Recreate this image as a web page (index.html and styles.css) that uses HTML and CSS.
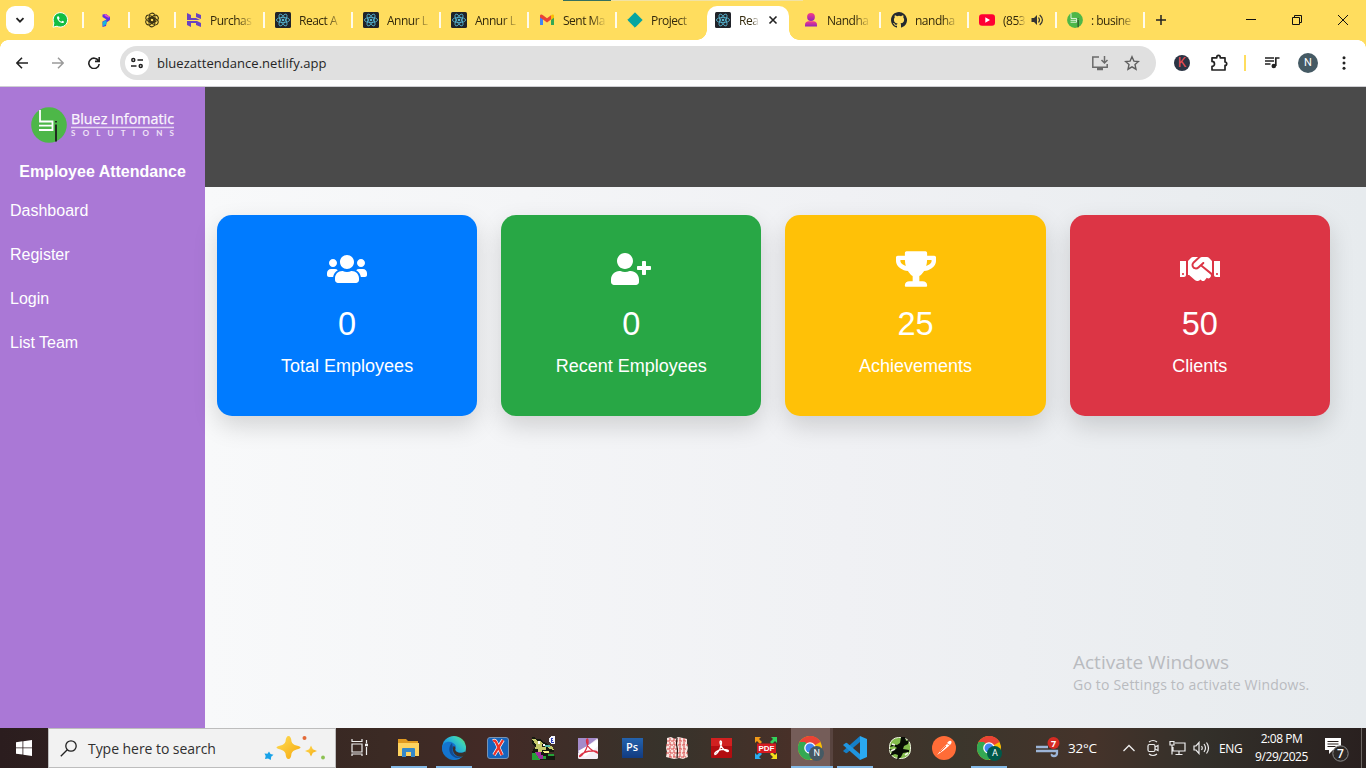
FILE: index.html
```html
<!DOCTYPE html>
<html lang="en">
<head>
<meta charset="utf-8">
<title>Employee Attendance</title>
<link rel="stylesheet" href="styles.css">
</head>
<body>
<svg class="defs" width="0" height="0">
  <defs>
    <symbol id="react" viewBox="0 0 16 16"><rect width="16" height="16" rx="1.5" fill="#20232a"/><g fill="none" stroke="#56b4d0" stroke-width=".85"><ellipse cx="8" cy="8" rx="6.6" ry="2.6"/><ellipse cx="8" cy="8" rx="6.6" ry="2.6" transform="rotate(60 8 8)"/><ellipse cx="8" cy="8" rx="6.6" ry="2.6" transform="rotate(120 8 8)"/></g><circle cx="8" cy="8" r="1.3" fill="#56b4d0"/></symbol>
    <symbol id="bluez" viewBox="0 0 36 36"><circle cx="18" cy="18" r="17.8" fill="#4db748"/><path d="M9 3v11.500h12.500v8.500H8M8 18.700h13" fill="none" stroke="#fff" stroke-width="1.800"/><path d="M25 14v1.500M25 17.500v17" stroke="#202b20" stroke-width="2"/></symbol>
    <symbol id="chrome" viewBox="0 0 24 24"><circle cx="12" cy="12" r="12" fill="#fbbc04"/><path d="M12 12L1.600 6A12 12 0 0 1 22.400 6z" fill="#ea4335"/><path d="M12 0a12 12 0 0 1 10.400 6H12z" fill="#ea4335"/><path d="M1.600 6A12 12 0 0 0 12 24l5.200-9L12 12z" fill="#34a853"/><path d="M1.600 6l5.200 9L12 12 7 6z" fill="#34a853"/><circle cx="12" cy="12" r="5.800" fill="#fff"/><circle cx="12" cy="12" r="4.500" fill="#4285f4"/></symbol>
    <linearGradient id="person" x1="0" y1="0" x2="0" y2="1"><stop offset="0" stop-color="#f73b88"/><stop offset="1" stop-color="#9423b8"/></linearGradient>
    <linearGradient id="edge" x1="0" y1="1" x2="1" y2="0"><stop offset="0" stop-color="#0c59a4"/><stop offset=".45" stop-color="#1b9de2"/><stop offset=".75" stop-color="#39cfc0"/><stop offset="1" stop-color="#6de04d"/></linearGradient>
    <linearGradient id="gold" x1="0" y1="0" x2="1" y2="1"><stop offset="0" stop-color="#ffdf5a"/><stop offset="1" stop-color="#f5a70b"/></linearGradient>
    <linearGradient id="pr" x1="0" y1="0" x2="1" y2="1"><stop offset="0" stop-color="#22c1ef"/><stop offset=".4" stop-color="#5b2be0"/><stop offset="1" stop-color="#7a32ee"/></linearGradient>
  </defs>
</svg>

<header class="tabstrip">
  <button class="tab-search"><svg width="10" height="10" viewBox="0 0 10 10"><path d="M1.500 3.200L5 6.700l3.500-3.500" fill="none" stroke="#222" stroke-width="1.800"/></svg></button>
  <div class="tab pinned"><svg width="16" height="16" viewBox="0 0 16 16"><path d="M1 15.200L1.900 11A7.200 7.200 0 1 1 5 14.200z" fill="#12bd43" stroke="#fff" stroke-width="1"/><path d="M5.500 4.500c-2 1.600 2.700 7.300 5.500 6.500 2-.8 1-1.600-.7-2.300l-1 1c-1.200-.4-2-1.300-2.500-2.400l.8-.9c-.6-1.800-1.200-2.300-2.100-1.900z" fill="#fff"/></svg></div>
  <div class="tab pinned"><svg width="16" height="16" viewBox="0 0 16 16"><path d="M4.500 2.500L8 2l4 3v3l-3.500 2.500L8 14l-3.500 1V9.500L8.500 7.500 4.500 5z" fill="#5d2de2"/><path d="M7 1.800l5 3.200-1.500.8-4-2z" fill="#e84bcb"/><path d="M4.500 10L8.500 8v4L5 14.500z" fill="#15b7dc"/></svg></div>
  <div class="tab pinned"><svg width="16" height="16" viewBox="0 0 16 16" fill="none" stroke="#3a3212" stroke-width="1.100"><path id="lobe" d="M5.200 4.800V4a2.900 2.900 0 0 1 5.500-1.200M5.200 4.500v4L8 10.100M6.300 3.600L10 5.700v2.500"/><use href="#lobe" transform="rotate(60 8 8)"/><use href="#lobe" transform="rotate(120 8 8)"/><use href="#lobe" transform="rotate(180 8 8)"/><use href="#lobe" transform="rotate(240 8 8)"/><use href="#lobe" transform="rotate(300 8 8)"/></svg></div>
  <div class="tab first"><svg width="16" height="16" viewBox="0 0 16 16" fill="#6b43c0"><path d="M1 1l4 2v3h5l4 2H1zM10 1l5 2v4l-5-2zM1 9h10l4 2v4l-5-2v-2H5v4l-4-2z"/></svg><span>Purchas</span></div>
  <div class="tab"><svg width="16" height="16"><use href="#react"/></svg><span>React A</span></div>
  <div class="tab"><svg width="16" height="16"><use href="#react"/></svg><span>Annur L</span></div>
  <div class="tab"><svg width="16" height="16"><use href="#react"/></svg><span>Annur L</span></div>
  <div class="tab"><svg width="16" height="16" viewBox="0 0 16 16"><path d="M1 4v9h3V6z" fill="#4285f4"/><path d="M15 4v9h-3V6z" fill="#34a853"/><path d="M12 3.500V8l3-2.200V4c0-1.500-1.600-2-3-.5z" fill="#fbbc04"/><path d="M1 4c0-1.500 1.600-2 3-.7l4 3 4-3V7.500l-4 3-4-3L1 5.500z" fill="#ea4335"/></svg><span>Sent Ma</span></div>
  <div class="tab no-line"><svg width="16" height="16" viewBox="0 0 16 16"><path d="M8 .8L15.200 8 8 15.200.8 8z" fill="#06a5a0" stroke="#06a5a0" stroke-linejoin="round"/></svg><span>Project</span></div>
  <div class="tab active"><svg width="16" height="16"><use href="#react"/></svg><span>Rea</span><svg width="10" height="10" viewBox="0 0 10 10"><path d="M1.500 1.500l7 7M8.500 1.500l-7 7" stroke="#222" stroke-width="1.600"/></svg></div>
  <div class="tab after"><svg width="16" height="16" viewBox="0 0 16 16" fill="url(#person)"><circle cx="8" cy="5" r="3.900"/><path d="M2 14.500v-2c0-2 1.500-3 3.500-3.200h5c2 .2 3.500 1.200 3.500 3.200v2z"/></svg><span>Nandha</span></div>
  <div class="tab"><svg width="16" height="16" viewBox="0 0 16 16"><path fill="#24292f" d="M8 0C3.580 0 0 3.580 0 8c0 3.540 2.290 6.530 5.470 7.590.4.070.55-.17.55-.38 0-.19-.01-.82-.01-1.490-2.010.37-2.530-.49-2.690-.94-.09-.23-.48-.94-.82-1.130-.28-.15-.68-.52-.01-.53.63-.01 1.080.58 1.230.82.72 1.210 1.870.87 2.330.66.07-.52.28-.87.51-1.070-1.780-.2-3.640-.89-3.640-3.950 0-.87.31-1.590.82-2.150-.08-.2-.36-1.020.08-2.120 0 0 .67-.21 2.200.82a7.600 7.600 0 0 1 4 0c1.530-1.040 2.200-.82 2.200-.82.44 1.100.16 1.920.08 2.120.51.56.82 1.270.82 2.150 0 3.070-1.870 3.750-3.650 3.950.29.25.54.73.54 1.480 0 1.070-.01 1.930-.01 2.200 0 .21.15.46.55.38A8 8 0 0 0 8 0z"/></svg><span>nandha</span></div>
  <div class="tab audio"><svg width="16" height="16" viewBox="0 0 16 16"><rect y="2.200" width="16" height="11.600" rx="3" fill="#ff0033"/><path d="M6.300 5.300v5.400L11 8z" fill="#fff"/></svg><span>(853</span><svg class="sound" width="13" height="12" viewBox="0 0 13 12"><path d="M.5 4h2.500l3-3v10L3 8H.5z" fill="#333"/><path d="M7.500 3.500q2 2.500 0 5M8.700 1q5.500 5 0 10" fill="none" stroke="#333" stroke-width="1.200"/></svg></div>
  <div class="tab"><svg width="16" height="16"><use href="#bluez"/></svg><span>: busine</span></div>
  <button class="new-tab"><svg width="10" height="10" viewBox="0 0 10 10"><path d="M5 0v10M0 5h10" stroke="#222" stroke-width="1.500"/></svg></button>
  <div class="window-buttons">
    <svg width="10" height="10" viewBox="0 0 10 10"><path d="M0 4.500h10" stroke="#111"/></svg>
    <svg width="10" height="10" viewBox="0 0 10 10" fill="none" stroke="#111"><path d="M.5 2.500h7v7h-7zM2.500 2.500v-2h7v7h-2"/></svg>
    <svg width="10" height="10" viewBox="0 0 10 10"><path d="M0 0l10 10M10 0L0 10" stroke="#111"/></svg>
  </div>
  <div class="edge-line"></div>
</header>

<div class="toolbar">
  <nav class="history">
    <svg width="12" height="12" viewBox="0 0 12 12"><path d="M12 6H1M6 .8L.8 6 6 11.200" fill="none" stroke="#222" stroke-width="1.600"/></svg>
    <svg width="12" height="12" viewBox="0 0 12 12"><path d="M0 6h11M6 .8L11.200 6 6 11.200" fill="none" stroke="#9a9a9a" stroke-width="1.500"/></svg>
    <svg width="12" height="12" viewBox="0 0 12 12"><path d="M10.500 3.700A5.200 5.200 0 1 0 11.200 7M11.200 0v4.400H7" fill="none" stroke="#222" stroke-width="1.600"/></svg>
  </nav>
  <div class="omnibox">
    <span class="site-info"><svg width="12" height="12" viewBox="0 0 12 12" fill="none" stroke="#222" stroke-width="1.500"><circle cx="2.300" cy="3" r="1.500"/><path d="M6.500 3H12M0 9h5.500"/><circle cx="9.700" cy="9" r="1.500"/></svg></span>
    <span class="url">bluezattendance.netlify.app</span>
    <svg width="16" height="16" viewBox="0 0 16 16" fill="none" stroke="#6b6b6b" stroke-width="1.500"><path d="M7 2H.8v10.200h14.400V9"/><path d="M5 14h6" stroke-width="2.500"/><path d="M12.500 1v6.500M9.500 5l3 3 3-3"/></svg>
    <svg width="16" height="16" viewBox="0 0 16 16" fill="none" stroke="#5e5e5e" stroke-width="1.400"><path d="M8 1.800l1.900 4.300 4.600.4-3.500 3.100 1 4.600L8 11.800l-4 2.400 1-4.600-3.500-3.100 4.600-.4z"/></svg>
  </div>
  <div class="extensions">
    <span class="k-badge">K</span>
    <svg width="18" height="18" viewBox="0 0 18 18"><path d="M2 3.800h4.800V3a1.700 1.700 0 0 1 3.400 0v.8H15V8a1.700 1.700 0 0 1 0 3.400V16H2v-3.600a2.500 2.500 0 0 0 0-5z" fill="none" stroke="#222" stroke-width="1.700" stroke-linejoin="round"/></svg>
    <i class="divider"></i>
    <svg width="16" height="14" viewBox="0 0 16 14"><path d="M1 2h9M1 5h9M1 8h5.500" stroke="#222" stroke-width="1.500"/><circle cx="9.800" cy="10" r="2.300" fill="#222"/><path d="M11.800 10V2h3.700" fill="none" stroke="#222" stroke-width="1.700"/></svg>
    <span class="avatar">N</span>
    <svg width="4" height="14" viewBox="0 0 4 14" fill="#222"><circle cx="2" cy="1.700" r="1.500"/><circle cx="2" cy="7" r="1.500"/><circle cx="2" cy="12.300" r="1.500"/></svg>
  </div>
</div>

<div class="page">
  <aside class="sidebar">
    <svg class="logo" width="146" height="38" viewBox="0 0 146 38"><use href="#bluez" x="1" y="1" width="36" height="36"/><text x="41" y="17.500" class="logo-name" textLength="103" lengthAdjust="spacingAndGlyphs">Bluez Infomatic</text><path d="M41 21.500h103" stroke="#e6d3f3" stroke-width="1.300"/><text x="41" y="30.200" class="logo-sub" textLength="103">SOLUTIONS</text></svg>
    <h1 class="title">Employee Attendance</h1>
    <nav class="menu"><a>Dashboard</a><a>Register</a><a>Login</a><a>List Team</a></nav>
  </aside>
  <main class="content">
    <div class="banner"></div>
    <section class="cards">
      <article class="card blue"><svg width="40" height="40" viewBox="0 0 640 512"><path d="M96 224c35.300 0 64-28.700 64-64s-28.700-64-64-64-64 28.700-64 64 28.700 64 64 64zm448 0c35.300 0 64-28.700 64-64s-28.700-64-64-64-64 28.700-64 64 28.700 64 64 64zm32 32h-64c-17.600 0-33.500 7.100-45.100 18.600 40.300 22.100 68.900 62 75.100 109.400h66c17.700 0 32-14.300 32-32v-32c0-35.300-28.700-64-64-64zm-256 0c61.900 0 112-50.100 112-112S381.900 32 320 32 208 82.100 208 144s50.100 112 112 112zm76.800 32h-8.300c-20.800 10-43.900 16-68.500 16s-47.600-6-68.500-16h-8.300C179.600 288 128 339.600 128 403.200V432c0 26.500 21.500 48 48 48h288c26.500 0 48-21.500 48-48v-28.800c0-63.600-51.600-115.200-115.200-115.200zm-223.700-13.400C161.500 263.100 145.600 256 128 256H64c-35.300 0-64 28.700-64 64v32c0 17.700 14.300 32 32 32h65.900c6.300-47.400 34.900-87.300 75.200-109.400z"/></svg><strong>0</strong><span>Total Employees</span></article>
      <article class="card green"><svg width="40" height="40" viewBox="0 0 640 512"><path d="M624 208h-64v-64c0-8.800-7.200-16-16-16h-32c-8.800 0-16 7.200-16 16v64h-64c-8.800 0-16 7.200-16 16v32c0 8.800 7.200 16 16 16h64v64c0 8.800 7.200 16 16 16h32c8.800 0 16-7.200 16-16v-64h64c8.800 0 16-7.200 16-16v-32c0-8.800-7.200-16-16-16zm-400 48c70.700 0 128-57.300 128-128S294.700 0 224 0 96 57.300 96 128s57.300 128 128 128zm89.600 32h-16.700c-22.200 10.200-46.900 16-72.900 16s-50.600-5.800-72.900-16h-16.700C60.200 288 0 348.200 0 422.400V464c0 26.500 21.500 48 48 48h352c26.500 0 48-21.500 48-48v-41.600c0-74.200-60.200-134.400-134.400-134.400z"/></svg><strong>0</strong><span>Recent Employees</span></article>
      <article class="card amber"><svg width="40" height="40" viewBox="0 0 576 512"><path d="M552 64H448V24c0-13.300-10.700-24-24-24H152c-13.300 0-24 10.700-24 24v40H24C10.700 64 0 74.700 0 88v56c0 35.700 22.500 72.400 61.900 100.700 31.500 22.700 69.800 37.100 110 41.700C203.300 338.500 240 360 240 360v72h-48c-35.300 0-64 20.700-64 56v12c0 6.600 5.400 12 12 12h296c6.600 0 12-5.400 12-12v-12c0-35.300-28.700-56-64-56h-48v-72s36.700-21.500 68.100-73.600c40.300-4.600 78.600-19 110-41.700 39.300-28.300 61.900-65 61.900-100.700V88c0-13.300-10.700-24-24-24zM99.300 192.800C74.900 175.200 64 155.600 64 144v-16h64.200c1 32.600 5.800 61.200 12.800 86.200-15.100-5.200-29.200-12.400-41.700-21.400zM512 144c0 16.100-17.700 36.100-35.300 48.800-12.500 9-26.700 16.200-41.800 21.400 7-25 11.800-53.600 12.800-86.200H512v16z"/></svg><strong>25</strong><span>Achievements</span></article>
      <article class="card red"><svg width="40" height="40" viewBox="0 0 640 512"><path d="M434.700 64h-85.900c-8 0-15.700 3-21.600 8.400l-98.300 90c-.1.100-.2.300-.3.400-16.600 15.600-16.300 40.500-2.100 56 12.700 13.900 39.400 17.600 56.100 2.700.1-.1.300-.1.400-.2l79.900-73.200c6.500-5.900 16.700-5.500 22.600 1 6 6.500 5.500 16.600-1 22.600l-26.100 23.900L504 313.800c2.900 2.400 5.500 5 7.900 7.700V128l-54.600-54.600c-5.900-6-14.100-9.400-22.600-9.400zM544 128.200v223.900c0 17.700 14.300 32 32 32h64V128.200h-96zm48 223.900c-8.800 0-16-7.200-16-16s7.200-16 16-16 16 7.200 16 16-7.200 16-16 16zM0 384h64c17.700 0 32-14.300 32-32V128.200H0V384zm48-63.900c8.800 0 16 7.200 16 16s-7.200 16-16 16-16-7.200-16-16c0-8.900 7.200-16 16-16zm435.900 18.600L334.600 217.500l-30 27.500c-29.700 27.100-75.200 24.500-101.700-4.400-26.900-29.400-24.800-74.900 4.400-101.700L289.100 64h-83.800c-8.500 0-16.600 3.400-22.600 9.400L128 128v223.900h18.300l90.500 81.900c27.400 22.300 67.700 18.100 90-9.300l.2-.2 17.900 15.500c15.900 13 39.400 10.500 52.300-5.400l31.400-38.600 5.400 4.400c13.700 11.100 33.900 9.100 45-4.700l9.500-11.700c11.200-13.800 9.100-33.900-4.600-45.100z"/></svg><strong>50</strong><span>Clients</span></article>
    </section>
  </main>
  <div class="watermark"><b>Activate Windows</b><span>Go to Settings to activate Windows.</span></div>
</div>

<footer class="taskbar">
  <div class="start"><svg width="16" height="16" viewBox="0 0 16 16" fill="#fff"><path d="M0 2.200l6.500-.9v6.200H0zM7.300 1.200L16 0v7.500H7.300zM0 8.300h6.500v6.300L0 13.800zM7.300 8.300H16V16l-8.700-1.200z"/></svg></div>
  <div class="search">
    <svg width="17" height="17" viewBox="0 0 17 17" fill="none" stroke="#222" stroke-width="1.300"><circle cx="11" cy="6" r="5.200"/><path d="M7.300 9.700L.8 16.200"/></svg>
    <span>Type here to search</span>
    <svg width="62" height="26" viewBox="0 0 62 26"><path d="M24.500 1q2.500 0 3 5.500 1 3 5 4 4 1 4 2t-4 2q-4 1-5 4-.5 5.500-3 5.500t-3-5.500q-1-3-5-4-4-1-4-2t4-2q4-1 5-4 .5-5.500 3-5.500z" fill="url(#gold)"/><path d="M47 10.500l1.800 3.700 4.200 1.800-4.200 1.800L47 21.500l-1.800-3.700L41 16l4.200-1.800z" fill="url(#gold)"/><path d="M5 16.500l1.500 2.500 3 .8-2.300 2-.4 3.200-2.800-1.500-3 .5.700-3-1.200-2.500 3 .3z" fill="#18a2e8"/><circle cx="40.500" cy="3" r="2" fill="#e36a37"/><circle cx="59" cy="22.500" r="1.900" fill="#8cc152"/></svg>
  </div>
  <div class="apps">
    <div class="app task-view"><svg width="18" height="18" viewBox="0 0 18 18" fill="none" stroke="#eee" stroke-width="1.200"><path d="M1 5h10v8H1zM1 0v2.500h10V0M1 17v-2h10v2M15.500 1v3.500M15.500 8v8"/><path d="M14 6h3" stroke-width="2.500"/></svg></div>
    <div class="app open"><svg width="24" height="24" viewBox="0 0 24 24"><path d="M1 3h8l2 2h10v5H1z" fill="#e19a20"/><path d="M1 7h21v13H1z" fill="#ffd35f"/><path d="M5 21v-8q0-1 1-1h11q1 0 1 1v8h-4v-5H9v5z" fill="#3688c8"/></svg></div>
    <div class="app open"><svg width="24" height="24" viewBox="0 0 24 24"><circle cx="12" cy="12" r="12" fill="url(#edge)"/><path d="M0 12C1 6 7 4.500 11 7c3 2 3.500 4 2.500 5.500-1 2 1 4.500 5 4.300 2 0 3.200-.6 4.200-1.300C20 22 14 25 9 23 4 21 0 17 0 12z" fill="#1474cf"/><path d="M10 7C7 10 6 15 9.500 19c3 3.500 7.500 4 10.500 1.800-7 1.200-11-4-9-8.800z" fill="#124b90"/><path d="M11.500 10q2 0 2 2.500c-1 1.500.8 4.300 5 4.300 2 0 3.500-.6 4.500-1.300l1 3-3 2c-6 1.500-12-3-9.500-10.500z" fill="#3a302a"/></svg></div>
    <div class="app"><svg width="22" height="22" viewBox="0 0 22 22"><rect x=".5" y=".5" width="21" height="21" rx="2.500" fill="#1564bd" stroke="#7892b2"/><path d="M6 4q2-1 3 1l6 13M16 3L7 18" stroke="#fff" stroke-width="3.600" fill="none"/><path d="M6 4q2-1 3 1l6 13M16 3L7 18" stroke="#ee3328" stroke-width="2.400" fill="none"/></svg></div>
    <div class="app"><svg width="24" height="24" viewBox="0 0 24 24" shape-rendering="crispEdges"><path d="M1 1h2l2 2h4l3 3 3 1 3 2 5 4v3h-4l-3 2h5l3 3v3H1v-8l3-5-3-4z" fill="#151910"/><path d="M1 3h3l3 2h3l2 3-3 1H5zM5 9h6v2h4v3h-4v2H7v-3H4zM17 10h4l2 4-5-1z" fill="#c6c96b"/><path d="M1 17h3l3 3 2 4H1zM17 18h6v2h-6zM11 20h4v3h-3z" fill="#24a137"/><path d="M4 16h6v3h2v4H8z" fill="#9c2d9c"/><path d="M12 15h6v2h-5z" fill="#f6ef87"/><path d="M7 5h2v3H7zM12 8h2v2h-2z" fill="#fff"/><path d="M14 9h5v2h-5z" fill="#50b6a6"/><path d="M20 0h4v8h-4l-2-2V2z" fill="#f4f6ff"/><path d="M22 2h-2v4h3M20 4h2" fill="none" stroke="#3040bd"/></svg></div>
    <div class="app"><svg width="20" height="21" viewBox="0 0 20 21"><rect width="20" height="21" rx="1.500" fill="#f5eff6"/><path d="M0 0h20L0 15z" fill="#a48bca"/><path d="M0 13L20 2v6L7 19z" fill="#fff"/><path d="M9.500 1q-1.500 0-.7 4 1 6 10.500 10 .5-2.500-5-2Q6 13 1.500 18q0 1.500 2.500-1 5-5 6-12 0-4-.5-4z" fill="none" stroke="#dc3044" stroke-width="1.300"/></svg></div>
    <div class="app"><span class="ps">Ps</span></div>
    <div class="app"><svg width="24" height="24" viewBox="0 0 24 24"><path d="M2 2l4-1 4 2 3-2 5 1 4 1v5l1 4-1 4 1 5-5 2-4-1-5 1-4-1-4-1 1-5-1-4 1-5z" fill="#f9e6e1"/><path d="M2 5h20M1 9h22M2 13h20M1 17h22M4 21h17M5 2v20M9 2v20M15 2v20M19 2v20" stroke="#d84848" stroke-width="1" stroke-dasharray="3 1"/><path d="M12 2l-.5 6 1 6-.5 8" fill="none" stroke="#281510" stroke-width="1.200"/></svg></div>
    <div class="app"><svg width="21" height="20" viewBox="0 0 21 20"><rect width="21" height="20" rx="1" fill="#b20d10"/><path d="M0 0h21v8H0z" fill="#d12020"/><path d="M10 3q-1.500 0-.7 3Q11 11 16 13.500q2.500 0 .7-1.400-4-1.600-9 .2Q2.500 15 4 16.500q2 0 5-6 2.500-7 1-7.500z" fill="none" stroke="#fff" stroke-width="1.300"/></svg></div>
    <div class="app"><svg width="24" height="24" viewBox="0 0 24 24"><path d="M1 1h6L5 3l3 3-2 2-3-3-2 2z" fill="#f29a18"/><path d="M23 1v6l-2-2-3 3-2-2 3-3-2-2z" fill="#32d45c"/><path d="M1 23v-6l2 2 3-3 2 2-3 3 2 2z" fill="#29aef0"/><path d="M23 23h-6l2-2-3-3 2-2 3 3 2-2z" fill="#f3df1c"/><rect x="3" y="7.500" width="19" height="9.500" fill="#d61b20"/><text x="12.500" y="15.200" text-anchor="middle" class="pdf">PDF</text></svg></div>
    <div class="app open current"><svg width="24" height="24"><use href="#chrome" width="24" height="24"/></svg><span class="profile slate">N</span></div>
    <div class="app open"><svg width="24" height="24" viewBox="0 0 24 24"><path d="M17 0l7 3v18l-7 3z" fill="#2aa9f2"/><path d="M17 0v6L4 17l-1 .3L0 15z" fill="#157fc7"/><path d="M17 24v-6L4 7l-1-.3L0 9z" fill="#1f95e0"/></svg></div>
    <div class="app"><svg width="24" height="24" viewBox="0 0 24 24"><rect x="1.500" y="1.500" width="21" height="21" rx="9" fill="#83bd4c" stroke="#eef5df"/><path d="M13 1h4l1 4 3-1-1 4-4 2-1 3 6 1v2l-6 1-2 4-4 3 1-5-3-1-5 2 2-4-3-3 5 1 3-2-3-2-4 1 2-3 5 1 3-2z" fill="#080d05"/><path d="M3 15l4-2M4 8l3 1M17 19l3-2" stroke="#f3f8e7" stroke-width="1.600"/></svg></div>
    <div class="app"><svg width="24" height="24" viewBox="0 0 24 24"><circle cx="12" cy="12" r="12" fill="#ff6c37"/><path d="M5 19l5-6 5-5 2.500 1.500-6 5zM15 7l2-2q3-1 2.500 2L18 9z" fill="#fff"/><path d="M8 16l6-6" stroke="#ff6c37"/></svg></div>
    <div class="app open"><svg width="24" height="24"><use href="#chrome" width="24" height="24"/></svg><span class="profile teal">A</span></div>
  </div>
  <div class="weather"><svg width="24" height="22" viewBox="0 0 24 22"><path d="M0 10h12M0 14h21v2q0 3-3 3-3 0-2-2" stroke="#9db5d7" stroke-width="2.300" fill="none"/><circle cx="17.500" cy="6" r="6" fill="#d52b22"/><text x="17.500" y="9.500" text-anchor="middle" class="badge-no">7</text></svg><span>32°C</span></div>
  <div class="tray">
    <svg width="12" height="8" viewBox="0 0 12 8"><path d="M.5 7L6 1.500 11.500 7" fill="none" stroke="#eee" stroke-width="1.300"/></svg>
    <svg width="12" height="18" viewBox="0 0 12 18" fill="none" stroke="#eee" stroke-width="1.200"><rect x="1" y="5.500" width="7" height="7" rx="1.500"/><path d="M8 8l3-1.500v5L8 10M2 3q4-3 8 0M2 15q4 3 8 0"/></svg>
    <svg width="17" height="16" viewBox="0 0 17 16" fill="none" stroke="#eee" stroke-width="1.200"><path d="M6 3h10v8H4V7M10 11v3.500M6.500 14.500h7M1 1.500h4v3.500H1zM3 5v9.500"/></svg>
    <svg width="17" height="14" viewBox="0 0 17 14" fill="none" stroke="#eee" stroke-width="1.200"><path d="M1 5h2l3-3.500v11L3 9H1zM8.500 5q1.500 2 0 4M11 3q3 4 0 8M13.500 1.500q4 5.500 0 11"/></svg>
  </div>
  <span class="lang">ENG</span>
  <div class="clock"><span>2:08 PM</span><span>9/29/2025</span></div>
  <div class="notify"><svg width="26" height="26" viewBox="0 0 26 26"><path d="M1 1h16v12H9l-4 4v-4H1z" fill="#fff"/><path d="M3.500 4.500h11M3.500 7h11M3.500 9.500h8" stroke="#29211e"/><circle cx="16.500" cy="16.500" r="7.700" fill="#2d2927" stroke="#8a8a8a"/><text x="16.500" y="21" text-anchor="middle" class="note-no">7</text></svg></div>
</footer>
</body>
</html>
```
FILE: styles.css
```css
* { box-sizing: border-box; }
body { margin: 0; width: 1366px; height: 768px; overflow: hidden; display: flex; flex-direction: column; font-family: "Liberation Sans", Arial, sans-serif; background: #fff; }
svg { display: block; flex: none; }
.defs { position: absolute; }
button { border: 0; padding: 0; background: none; display: flex; align-items: center; justify-content: center; }

.tabstrip { position: relative; height: 40px; flex: none; background: #ffdd5e; display: flex; align-items: center; padding-left: 6px; font: 12px "Open Sans", "Noto Sans", sans-serif; color: #33290c; }
.tab-search { width: 28px; height: 28px; border-radius: 9px; background: #fff; margin-right: 4px; }
.tab { width: 88px; height: 16px; flex: none; display: flex; align-items: center; gap: 8px; padding-left: 10px; border-right: 2px solid #fffbea; }
.tab span { width: 46px; white-space: nowrap; letter-spacing: -.5px; line-height: 18px; padding-top: 1px; -webkit-mask-image: linear-gradient(90deg, #000 60%, rgba(0, 0, 0, .15) 90%); mask-image: linear-gradient(90deg, #000 60%, rgba(0, 0, 0, .15) 90%); }
.tab.pinned { width: 46px; padding-left: 14px; }
.tab.first { width: 89px; }
.tab.no-line { border-color: transparent; }
.tab.active { position: relative; width: 82px; height: 34px; margin: 6px 4px 0 2px; padding: 0 0 6px 8px; border: 0; border-radius: 10px 10px 0 0; background: #fff; }
.tab.active span { width: 21px; }
.tab.active::before, .tab.active::after { content: ""; position: absolute; bottom: 0; width: 10px; height: 10px; }
.tab.active::before { left: -10px; background: radial-gradient(circle at 0 0, transparent 9.5px, #fff 10px); }
.tab.active::after { right: -10px; background: radial-gradient(circle at 100% 0, transparent 9.5px, #fff 10px); }
.tab.audio span { width: 24px; }
.sound { margin-left: -4px; }
.new-tab { width: 32px; height: 28px; }
.window-buttons { margin-left: auto; display: flex; gap: 36px; padding-right: 18px; }
.edge-line { position: absolute; top: 0; left: 563px; width: 240px; height: 1px; background: linear-gradient(90deg, #35705f 48px, #f1e2a4 48px); }

.toolbar { height: 47px; flex: none; display: flex; align-items: center; padding-bottom: 1px; border-bottom: 1px solid #cfcfd3; background: radial-gradient(circle at 8px 8px, #fff 7.5px, #ffdd5e 8px) 0 0 / 8px 8px no-repeat, radial-gradient(circle at 0 8px, #fff 7.5px, #ffdd5e 8px) 100% 0 / 8px 8px no-repeat, #fff; }
.history { width: 120px; display: flex; gap: 24px; padding-left: 16px; }
.omnibox { width: 1036px; height: 34px; border-radius: 17px; background: #e0e0e0; display: flex; align-items: center; gap: 16px; padding: 0 16px 0 5px; }
.site-info { width: 24px; height: 24px; border-radius: 50%; background: #fff; display: flex; align-items: center; justify-content: center; }
.url { flex: 1; margin-left: -8px; font: 13px "Open Sans", "Noto Sans", sans-serif; letter-spacing: .04px; color: #252525; }
.extensions { flex: 1; display: flex; align-items: center; padding-left: 18px; }
.k-badge { width: 16px; height: 16px; border-radius: 50%; background: #2b3444; color: #ea4c53; font: 14px/16px "Liberation Mono", monospace; text-align: center; margin-right: 20px; }
.divider { width: 2px; height: 16px; background: #ffdd5e; margin: 0 18px 0 16px; }
.avatar { width: 20px; height: 20px; border-radius: 50%; background: #455a64; color: #fff; font: 11px/20px Roboto, sans-serif; text-align: center; margin: 0 24px 0 18px; }

.page { position: relative; height: 641px; flex: none; display: flex; }
.sidebar { width: 205px; background: #aa78d6; color: #fff; display: flex; flex-direction: column; }
.logo { margin: 19px 0 0 30px; }
.logo-name { font: 400 15px "Open Sans", sans-serif; fill: #fbf6fd; stroke: #fbf6fd; stroke-width: .25px; }
.logo-sub { font: 700 8px Lato, sans-serif; fill: #f0e3f8; }
.title { margin: 19px 0 0; font-size: 16px; line-height: 18px; text-align: center; }
.menu { display: flex; flex-direction: column; gap: 26px; padding: 21px 10px; font-size: 16px; line-height: 18px; }
.content { flex: 1; background: linear-gradient(90deg, #f8f9fa, #f0f1f4 55%, #e7ebee); }
.banner { height: 100px; background: #4a4a4a; }
.cards { display: grid; grid-template-columns: repeat(4, 1fr); gap: 24px; padding: 28px 36.2px 0 12px; }
.card { height: 201px; border-radius: 15px; padding-top: 34px; display: flex; flex-direction: column; align-items: center; color: #fff; box-shadow: 0 10px 25px rgba(0, 0, 0, .15); }
.card svg { fill: #fff; }
.card strong { font-weight: 400; font-size: 32.5px; line-height: 37px; margin-top: 17px; }
.card span { font-size: 18px; line-height: 21px; margin-top: 13px; }
.blue { background: #007bff; }
.green { background: #28a745; }
.amber { background: #ffc107; }
.red { background: #dc3545; }
.watermark { position: absolute; left: 1073px; top: 562px; display: flex; flex-direction: column; font-family: "Open Sans", "Noto Sans", sans-serif; color: #b9bbbf; white-space: nowrap; }
.watermark b { font-weight: 400; font-size: 19px; line-height: 26px; }
.watermark span { font-size: 14px; line-height: 20px; letter-spacing: .2px; }

.taskbar { height: 40px; flex: none; display: flex; align-items: center; background: linear-gradient(90deg, #2b1d1e, #3b2a24 28%, #432a26 36%, #37332b 49%, #483028 58%, #3b362c 70%, #45332a 80%, #33302a 88%, #29201f); color: #fff; font-family: "Open Sans", "Noto Sans", sans-serif; }
.start { width: 48px; display: flex; justify-content: center; }
.search { width: 288px; height: 40px; background: #f2f2f2; border: 1px solid #bdbdbd; display: flex; align-items: center; padding: 0 9px 0 11px; color: #303030; font-size: 14px; letter-spacing: -.05px; }
.search span { flex: 1; margin-left: 11px; }
.apps { width: 673px; margin-left: 2px; display: grid; grid-template-columns: 49px repeat(14, 1fr); height: 40px; }
.app { position: relative; display: flex; align-items: center; justify-content: center; }
.task-view { padding-right: 5px; }
.app.open { background: linear-gradient(#84b9e6, #84b9e6) center bottom / 36px 2px no-repeat; }
.app.current { background: linear-gradient(#84b9e6, #84b9e6) 3px bottom / 43px 2px no-repeat, linear-gradient(#755d59, #755d59) 3px 0 / 39px 40px no-repeat, linear-gradient(#58443f, #58443f) 42px 0 / 3px 40px no-repeat; }
.ps { width: 21px; height: 20px; background: linear-gradient(#2463ad, #123b80); font-size: 11px; line-height: 18px; font-weight: 600; text-align: center; }
.pdf { font: bold 8px "Liberation Sans", sans-serif; fill: #fff; }
.profile { position: absolute; left: 21px; top: 18px; width: 15px; height: 15px; border-radius: 50%; font: 9px/15px Roboto, sans-serif; text-align: center; }
.slate { background: #455a64; }
.teal { background: #00594a; }
.weather { margin-left: 25px; display: flex; align-items: center; gap: 8px; font-size: 13.5px; width: 86px; letter-spacing: -.2px; white-space: nowrap; }
.badge-no { font: bold 9px "Open Sans", sans-serif; fill: #fff; }
.tray { display: flex; align-items: center; width: 97px; }
.tray svg + svg { margin-left: 12px; }
.tray svg:nth-child(3) { margin-left: 10px; }
.tray svg:nth-child(4) { margin-left: 7px; }
.tray svg:nth-child(1) { margin-left: 1px; }
.lang { font-size: 12px; width: 25px; letter-spacing: -.3px; }
.clock { width: 75px; display: flex; flex-direction: column; align-items: center; font-size: 12px; line-height: 18px; letter-spacing: -.45px; white-space: nowrap; }
.notify { height: 40px; display: flex; align-items: center; padding: 4px 0 0 5px; width: 43px; border-right: 1px solid #6c6663; }
.note-no { font: 600 12px "Open Sans", sans-serif; fill: #fff; }
```
